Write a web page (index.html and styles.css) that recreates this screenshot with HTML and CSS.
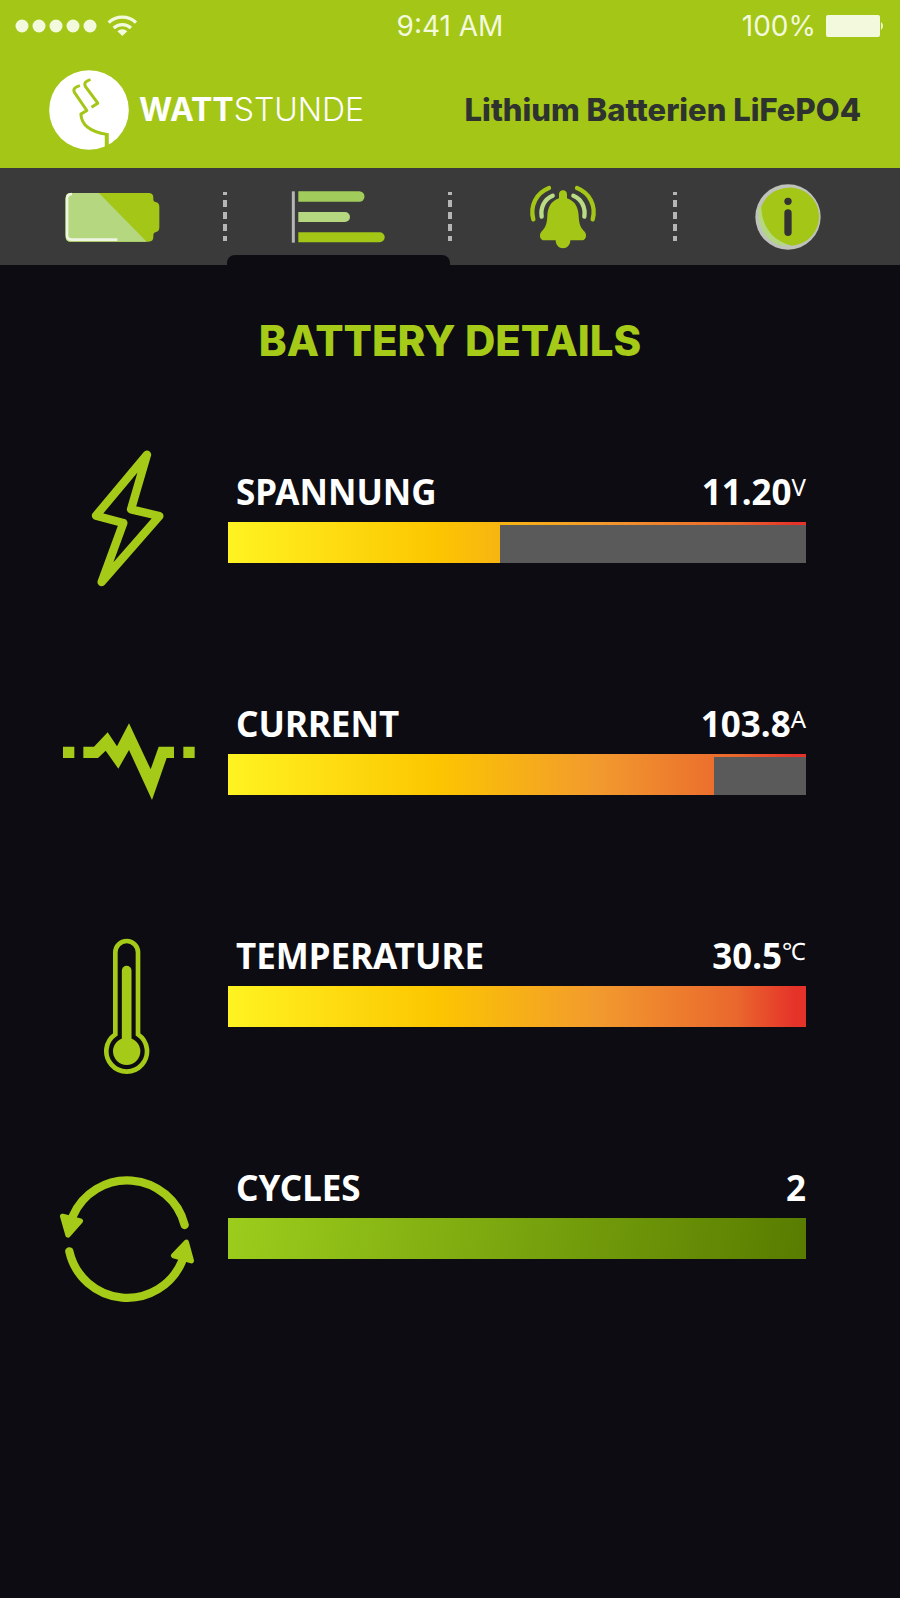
FILE: index.html
```html
<!DOCTYPE html>
<html lang="de">
<head>
    <meta charset="UTF-8">
    <meta name="viewport" content="width=device-width, initial-scale=1.0">
    <title>Wattstunde - Battery Details</title>
    <link rel="stylesheet" href="styles.css">
</head>
<body>

    <header>
        <div class="status-bar">
            <div class="status-left">
                <svg class="signal" viewBox="0 0 82 14" aria-hidden="true">
                    <circle cx="7" cy="7" r="6.5"/>
                    <circle cx="24" cy="7" r="6.5"/>
                    <circle cx="41" cy="7" r="6.5"/>
                    <circle cx="58" cy="7" r="6.5"/>
                    <circle cx="75" cy="7" r="6.5"/>
                </svg>
                <svg class="wifi" viewBox="322 40 93 69" aria-hidden="true">
                    <path class="wave" d="M327 66a59 59 0 0 1 82 0M342 82a38 38 0 0 1 52 0"/>
                    <path d="M368 106l-15-14a22 22 0 0 1 30 0z"/>
                </svg>
            </div>
            <span class="time">9:41 AM</span>
            <div class="status-right">
                <span>100%</span>
                <svg class="charge" viewBox="0 0 59 22" aria-hidden="true">
                    <rect width="54" height="22" rx="2"/>
                    <path d="M55 7a5 5 0 0 1 0 8z"/>
                </svg>
            </div>
        </div>
        <div class="brand-bar">
            <a class="brand" href="#">
                <svg class="logo" viewBox="145 205 241 241" aria-hidden="true">
                    <circle cx="265.5" cy="325.5" r="120" fill="#fff"/>
                    <g fill="none" stroke="#a3c617" stroke-width="9" stroke-linejoin="round">
                        <path d="M238 252Q214 258 222 273L259 327L241 338C243 372 274 392 319 399"/>
                        <path d="M270 234Q247 240 255 255L292 305L273 317"/>
                        <path d="M319 395v42" stroke-width="12"/>
                    </g>
                </svg>
                <span class="wordmark"><b>WATT</b>STUNDE</span>
            </a>
            <span class="product">Lithium Batterien LiFePO4</span>
        </div>
    </header>

    <nav>
        <ul class="tabs">
            <li>
                <a href="#" aria-label="Battery">
                    <svg viewBox="195 8 288 300">
                        <path d="M212 83h234q14 0 14 14v6q0 6 6 7q12 2 12 14v62q0 12-10 14q-8 2-8 9v6q0 14-14 14H212q-15 0-15-15V98q0-15 15-15z" fill="#a3c617"/>
                        <path d="M212 83h85L440 229H212q-15 0-15-15V98q0-15 15-15z" fill="#b4d780"/>
                        <path d="M216 86q-15 0-15 15v108q0 14 15 14h136" fill="none" stroke="#eef5e2" stroke-width="8"/>
                    </svg>
                </a>
            </li>
            <li class="active">
                <a href="#" aria-label="Battery details" aria-current="page">
                    <svg viewBox="870 8 288 300">
                        <path d="M880 78v154" stroke="#b5b5b5" stroke-width="9"/>
                        <path d="M895 78h183a15 15 0 0 1 0 31H895z" fill="#a1cb5b"/>
                        <path d="M895 140h140a15 15 0 0 1 0 30H895z" fill="#b4d780"/>
                        <path d="M895 201h244a15 15 0 0 1 0 30H895z" fill="#a3c617"/>
                    </svg>
                </a>
            </li>
            <li>
                <a href="#" aria-label="Alarms">
                    <svg viewBox="195 8 288 300">
                        <path d="M339 75c8 0 12 6 12 12v12c26 9 34 30 35 52 1 26 6 36 18 48 8 10 4 26-9 26h-34c0 14-10 24-22 24s-22-10-22-24h-34c-13 0-17-16-9-26 12-12 17-22 18-48 1-22 9-43 35-52V87c0-6 4-12 12-12z" fill="#a3c617"/>
                        <g fill="none" stroke-linecap="round" stroke-width="13">
                            <path d="M297 68c-38 15-58 53-47 94M381 68c38 15 58 53 47 94" stroke="#a3c617"/>
                            <path d="M308 91c-26 11-37 36-33 63M370 91c26 11 37 36 33 63" stroke="#b9dc84"/>
                        </g>
                    </svg>
                </a>
            </li>
            <li>
                <a href="#" aria-label="Info">
                    <svg viewBox="871 8 288 300">
                        <circle cx="1015" cy="155" r="98" fill="#bfc2ba"/>
                        <path d="M928 125C918 185 955 240 1010 242L1015 150Z" fill="#b4d780"/>
                        <path d="M1016 67A87 87 0 0 1 1026 241C970 228 936 184 935 124A88 88 0 0 1 1016 67Z" fill="#a3c617"/>
                        <circle cx="1015" cy="108" r="11" fill="#333"/>
                        <path d="M1015 143v58" stroke="#333" stroke-width="22" stroke-linecap="round"/>
                    </svg>
                </a>
            </li>
        </ul>
    </nav>

    <h1>BATTERY DETAILS</h1>

    <main>
        <section class="metric">
            <svg class="metric-icon" viewBox="60 57 408 480" aria-hidden="true">
                <path d="M321 74L273 238L358 258L185 456L250 279L168 257Z" fill="none" stroke="#a6ca18" stroke-width="25" stroke-linejoin="round"/>
            </svg>
            <div class="metric-body">
                <div class="metric-head">
                    <h2>SPANNUNG</h2>
                    <p>11.20<span class="unit">V</span></p>
                </div>
                <div class="bar"><div class="rest" style="width: 53%"></div></div>
            </div>
        </section>

        <section class="metric">
            <svg class="metric-icon" viewBox="60 -27 408 480" aria-hidden="true">
                <g fill="#a6ca18">
                    <path d="M69 170h34v34H69zM430 170h34v34h-34z"/>
                    <path d="M130 170h32l41-43 28 42 36-69 65 138 24-68h46v34h-22l-44 126-69-150-32 56-38-54-23 22h-44z"/>
                </g>
            </svg>
            <div class="metric-body">
                <div class="metric-head">
                    <h2>CURRENT</h2>
                    <p>103.8<span class="unit">A</span></p>
                </div>
                <div class="bar"><div class="rest" style="width: 16%"></div></div>
            </div>
        </section>

        <section class="metric">
            <svg class="metric-icon" viewBox="60 -20 408 480" aria-hidden="true">
                <path d="M226 344V98a34 34 0 0 1 68 0V344a61 61 0 1 1-68 0z" fill="none" stroke="#a6ca18" stroke-width="14"/>
                <path d="M260 153V380" stroke="#a6ca18" stroke-width="29" stroke-linecap="round"/>
                <circle cx="260" cy="395" r="41" fill="#a6ca18"/>
            </svg>
            <div class="metric-body">
                <div class="metric-head">
                    <h2>TEMPERATURE</h2>
                    <p>30.5<span class="unit">℃</span></p>
                </div>
                <div class="bar"></div>
            </div>
        </section>

        <section class="metric">
            <svg class="metric-icon" viewBox="60 -14 408 480" aria-hidden="true">
                <g stroke="#a6ca18" stroke-linecap="round" stroke-linejoin="round">
                    <path d="M434 226A178 178 0 0 0 98 200M88 305A178 178 0 0 0 426 335" fill="none" stroke-width="25"/>
                    <path d="M68 200l53 14-37 42zM439 278l-38 40 53 15z" fill="#a6ca18" stroke-width="16"/>
                </g>
            </svg>
            <div class="metric-body">
                <div class="metric-head">
                    <h2>CYCLES</h2>
                    <p>2</p>
                </div>
                <div class="bar bar-green"></div>
            </div>
        </section>
    </main>

</body>
</html>
```

FILE: styles.css
```css
* {
    box-sizing: border-box;
}

body {
    margin: 0;
    min-height: 100vh;
    background-color: #0c0c12;
    color: #fff;
    font-family: "Noto Sans", "Open Sans", sans-serif;
}

header {
    background-color: #a3c617;
    font-family: Inter, "Liberation Sans", sans-serif;
}

/* Phone status bar */
.status-bar {
    display: grid;
    grid-template-columns: 1fr auto 1fr;
    align-items: center;
    height: 51px;
    padding: 0 15px;
    color: #f3f9dd;
    fill: #f3f9dd;
    font-size: 28px;
    font-weight: 400;
}

.status-left,
.status-right {
    display: flex;
    align-items: center;
    gap: 10px;
}

.status-right {
    justify-content: flex-end;
}

.signal {
    width: 82px;
    height: 14px;
}

.wifi {
    width: 31px;
    height: 23px;
}

.wave {
    fill: none;
    stroke: #f3f9dd;
    stroke-width: 10px;
}

.charge {
    width: 59px;
    height: 22px;
}

.brand-bar {
    display: flex;
    align-items: center;
    justify-content: space-between;
    height: 117px;
    padding: 0 39px 0 49px;
}

.brand {
    display: flex;
    align-items: center;
    gap: 10px;
    color: #fff;
    text-decoration: none;
}

.logo {
    width: 80px;
    height: 80px;
}

.wordmark {
    font-size: 32px;
    font-weight: 300;
}

.wordmark b {
    font-weight: 700;
}

.product {
    color: #2e3330;
    font-size: 31px;
    font-weight: 800;
}

/* Tabs */
.tabs {
    display: grid;
    grid-template: 97px / repeat(4, 1fr);
    margin: 0;
    padding: 0;
    list-style: none;
    background-color: #3a3a3a;
}

.tabs li {
    position: relative;
}

.tabs a {
    display: flex;
    justify-content: center;
    height: 100%;
}

.tabs svg {
    width: 96px;
    height: 100px;
    flex-shrink: 0;
}

.tabs li + li::before {
    content: "";
    position: absolute;
    top: 24px;
    left: -2px;
    width: 4px;
    height: 49px;
    background: repeating-linear-gradient(#b5b5b5 0 3px, transparent 3px 8px, #b5b5b5 8px 12px);
}

.tabs .active::after {
    content: "";
    position: absolute;
    bottom: 0;
    left: 2px;
    right: 0;
    height: 10px;
    border-radius: 8px 8px 0 0;
    background-color: #0c0c12;
}

h1 {
    margin: 0;
    padding: 50px 0 82px;
    color: #a6ca18;
    font-family: Inter, "Liberation Sans", sans-serif;
    font-size: 42px;
    font-weight: 800;
    line-height: 52px;
    text-align: center;
}

/* Metrics */
main {
    display: flex;
    flex-direction: column;
    gap: 72px;
    padding: 0 94px 72px 60px;
}

.metric {
    display: grid;
    grid-template-columns: 136px 1fr;
    gap: 32px;
}

.metric-icon {
    width: 136px;
    height: 160px;
    overflow: visible;
}

.metric-body {
    padding-top: 18px;
}

.metric-head {
    display: flex;
    justify-content: space-between;
    height: 55px;
    padding-left: 8px;
    line-height: 50px;
}

.metric-head h2,
.metric-head p {
    margin: 0;
    font-size: 35px;
    font-weight: 700;
}

.metric-head .unit {
    font-size: 24px;
    font-weight: 400;
    line-height: 24px;
    vertical-align: 9px;
}

.bar {
    display: flex;
    align-items: flex-end;
    justify-content: flex-end;
    height: 41px;
    background: linear-gradient(to right, #fff322, #fcc600 36%, #f29a2e 64%, #ea672d 88%, #e5332a 98%);
}

.bar-green {
    background: linear-gradient(100deg, #9ccd1c, #587c00);
}

.rest {
    height: 38px;
    background-color: #5a5a5a;
}
```
